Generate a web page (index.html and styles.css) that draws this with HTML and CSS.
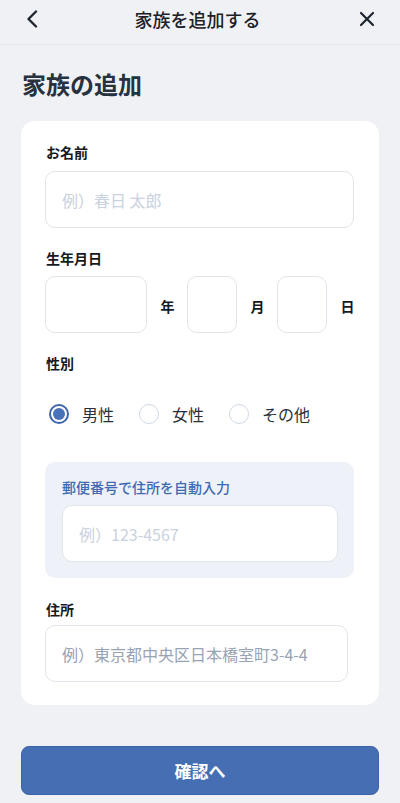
FILE: index.html
```html
<!DOCTYPE html>
<html lang="ja">
<head>
<meta charset="utf-8">
<title>家族を追加する</title>
<link rel="stylesheet" href="styles.css">
</head>
<body>
<header class="topbar">
  <button class="icon-btn back" aria-label="戻る">
    <svg width="14" height="18" viewBox="0 0 14 18"><path d="M11 1.5 L3.5 9 L11 16.5" fill="none" stroke="#1f2630" stroke-width="2.4" stroke-linecap="round" stroke-linejoin="round"/></svg>
  </button>
  <div class="topbar-title">家族を追加する</div>
  <button class="icon-btn close" aria-label="閉じる">
    <svg width="16" height="16" viewBox="0 0 16 16"><path d="M2 2 L14 14 M14 2 L2 14" fill="none" stroke="#1f2630" stroke-width="2.2" stroke-linecap="round"/></svg>
  </button>
</header>
<main class="content">
  <h1 class="page-title">家族の追加</h1>
  <section class="card">
    <div class="field">
      <div class="label">お名前</div>
      <div class="input"><span class="ph ph-light">例）春日 太郎</span></div>
    </div>
    <div class="field">
      <div class="label">生年月日</div>
      <div class="date-row">
        <div class="input box-year"></div>
        <span class="unit">年</span>
        <div class="input box-small"></div>
        <span class="unit">月</span>
        <div class="input box-small"></div>
        <span class="unit">日</span>
      </div>
    </div>
    <div class="field">
      <div class="label">性別</div>
      <div class="radio-row">
        <label class="radio"><span class="circle checked"></span><span>男性</span></label>
        <label class="radio"><span class="circle"></span><span>女性</span></label>
        <label class="radio"><span class="circle"></span><span>その他</span></label>
      </div>
    </div>
    <div class="postal">
      <div class="postal-label">郵便番号で住所を自動入力</div>
      <div class="input"><span class="ph ph-light">例）123-4567</span></div>
    </div>
    <div class="field last">
      <div class="label label-tight">住所</div>
      <div class="input addr"><span class="ph ph-dark">例）東京都中央区日本橋室町3-4-4</span></div>
    </div>
  </section>
  <button class="primary">確認へ</button>
</main>
</body>
</html>
```
FILE: styles.css
```css
* { box-sizing: border-box; }
html, body { margin: 0; padding: 0; }
body {
  width: 400px;
  height: 803px;
  overflow: hidden;
  background: #f0f1f5;
  font-family: "Noto Sans CJK JP", "Noto Sans", sans-serif;
  color: #1c2128;
}
.topbar {
  height: 45px;
  border-bottom: 1px solid #e4e6ea;
  display: flex;
  align-items: center;
  justify-content: space-between;
  padding: 0 20px 0 20px;
}
.icon-btn {
  width: 26px;
  height: 30px;
  border: 0;
  background: none;
  padding: 0;
  display: flex;
  align-items: center;
  justify-content: center;
  margin-top: -7px;
}
.back { justify-content: flex-start; padding-left: 5px; }
.close { justify-content: flex-end; margin-right: 5px; }
.topbar-title {
  font-size: 18px;
  font-weight: 500;
  line-height: 24px;
  margin-top: -7px;
  color: #1c2128;
}
.content { padding: 0 21px; }
.page-title {
  margin: 22px 0 0 1px;
  font-size: 24px;
  font-weight: 700;
  line-height: 34px;
  color: #28323e;
}
.card {
  margin-top: 20px;
  background: #fff;
  border-radius: 14px;
  padding: 21px 25px 23px 24px;
}
.field { margin-bottom: 20px; }
.field.last { margin-bottom: 0; }
.label {
  font-size: 14px;
  font-weight: 700;
  line-height: 20px;
  margin: 0 0 9px 1px;
  color: #16191e;
}
.label-tight { margin-bottom: 6px; }
.input {
  height: 57px;
  border: 1.5px solid #e1e4ea;
  border-radius: 10px;
  background: #fff;
  display: flex;
  align-items: center;
  padding-left: 16px;
}
.ph { font-size: 16px; line-height: 22px; }
.ph-light { color: #c9d2de; }
.ph-dark { color: #98a3b3; }
.addr { margin-right: 6px; }
.date-row {
  display: flex;
  align-items: center;
  gap: 13.5px;
  margin-top: -1px;
}
.box-year { width: 102px; }
.box-small { width: 50px; }
.unit {
  font-size: 14px;
  font-weight: 700;
  line-height: 20px;
  width: 13px;
  color: #16191e;
  margin-top: 3px;
}
.radio-row {
  display: flex;
  align-items: center;
  height: 24px;
  margin-top: 29px;
  margin-bottom: 36px;
  padding-left: 4px;
}
.radio {
  display: flex;
  align-items: center;
  gap: 13px;
  font-size: 16px;
  line-height: 22px;
  color: #2a3039;
  margin-right: 25px;
}
.circle {
  width: 20px;
  height: 20px;
  border-radius: 50%;
  border: 1.5px solid #cfd8e5;
  background: #fff;
  position: relative;
}
.circle.checked { border: 2px solid #3d66ad; }
.circle.checked::after {
  content: "";
  position: absolute;
  left: 2px;
  top: 2px;
  width: 12px;
  height: 12px;
  border-radius: 50%;
  background: #4a72b8;
}
.postal {
  background: #eef2f8;
  border-radius: 10px;
  padding: 15px 16px 16px 17px;
  margin-bottom: 21px;
}
.postal-label {
  font-size: 14px;
  font-weight: 500;
  line-height: 20px;
  color: #3f6ab3;
  margin-bottom: 8px;
}
.primary {
  display: block;
  width: 100%;
  height: 49px;
  margin-top: 41px;
  border: 1px solid #3b63a8;
  border-radius: 8px;
  background: #466fb3;
  color: #fff;
  font-family: "Noto Sans CJK JP", "Noto Sans", sans-serif;
  font-size: 17px;
  font-weight: 700;
}
```
